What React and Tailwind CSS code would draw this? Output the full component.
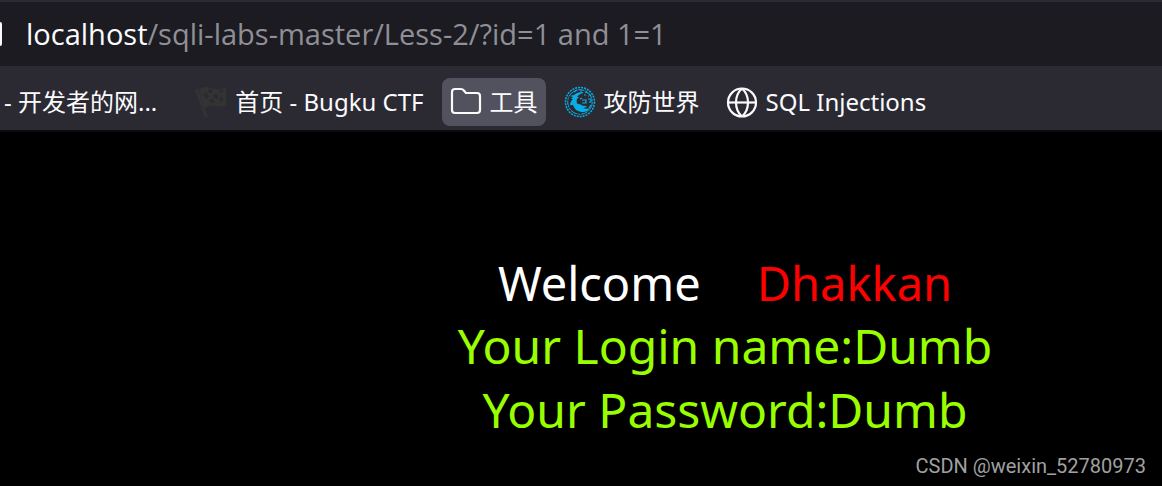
import React from 'react';

const FlagIcon = () => (
  <svg className="h-8 w-8 shrink-0" viewBox="0 0 32 32" aria-hidden="true">
    <path d="M0 4l3-1 10 28-3 1z" fill="#333333" />
    <path
      d="M4 4c4-4 8-3 12-2s10 2 15-1v18c-5 3-9 1-13 1s-6 1-9 3z"
      fill="#333333"
    />
    <path
      d="M13 3l5 1-1 3-3 0zM24 4l4-1v3l-3 1zM8 8l4-1 2 4-3 2zM18 8l5 1v4l-4-1zM14 13l4 0 2 4-4 0zM24 12l4-1v4l-3 1z"
      fill="#2b2a33"
    />
  </svg>
);

const FolderIcon = () => (
  <svg className="h-8 w-8 shrink-0" viewBox="0 0 32 32" fill="none" stroke="#fbfbfe" strokeWidth="2.2" aria-hidden="true">
    <path
      d="M5 3h6c1 0 2 .4 2.600 1.200L16 7h11a3 3 0 0 1 3 3v14a3 3 0 0 1-3 3H5a3 3 0 0 1-3-3V6a3 3 0 0 1 3-3z"
      strokeLinejoin="round"
    />
  </svg>
);

const WaveIcon = () => (
  <svg className="h-8 w-8 shrink-0" viewBox="0 0 32 32" fill="none" stroke="#06b0e6" aria-hidden="true">
    <circle cx="16" cy="16" r="14.500" strokeWidth="1.500" strokeDasharray="2 1" />
    <circle cx="16" cy="16" r="12.300" strokeWidth="1" strokeDasharray="7 1 2 1" />
    <path
      d="M19 6c-4 0-7 1-9 3l-4 1 3 1-2 2 2 0c-2 2-3 4-3 6l3 0c2 5 5 7 10 7 3 0 5-1 7-4-2 1-5 1-7 0 2 0 3-1 4-2-3 0-5 0-7-2-3 1-4-2-3-5l2-2-2 0c1-2 3-3 6-4z"
      fill="#06b0e6"
      stroke="none"
    />
    <path d="M16 13l2-1M18 14h4v3h-4M24 13h3v3h-2M10 6l3-2M16 5h2M21 6l3 1M25 8l2 2M27 19l-2 3M20 9h2M24 10h1" strokeWidth="1.200" />
  </svg>
);

const GlobeIcon = () => (
  <svg className="h-8 w-8 shrink-0" viewBox="0 0 32 32" fill="none" stroke="#fbfbfe" strokeWidth="2.2" aria-hidden="true">
    <circle cx="16" cy="16.500" r="14" />
    <path d="M16 2.500c-8 7-8 21 0 28M16 2.500c8 7 8 21 0 28" />
    <path d="M2 16.500h28" />
  </svg>
);

const Bookmark = ({ icon, label }) => (
  <a href="#" className="flex h-12 items-center gap-2 rounded-lg px-2 whitespace-nowrap">
    {icon}
    <span>{label}</span>
  </a>
);

const App = () => {
  return (
    <div className="flex min-h-screen flex-col bg-black font-['Noto_Sans','Noto_Sans_CJK_SC',sans-serif]">
      <header className="border-b-2 border-[#0c0c0d] bg-[#2b2a33] text-[#fbfbfe]">
        <div className="flex h-[66px] items-center border-t-2 border-[#2b2a33] bg-[#1c1b22]">
          <div className="h-6 w-[2px] rounded-r-sm bg-[#fbfbfe]" />
          <div
            role="textbox"
            aria-label="Address"
            contentEditable
            suppressContentEditableWarning
            className="ml-6 flex-1 font-['Open_Sans',sans-serif] text-[29px] leading-10 whitespace-nowrap text-[#8f8f96] outline-none"
          >
            <span className="text-[#fbfbfe]">localhost</span>/sqli-labs-master/Less-2/?id=1 and 1=1
          </div>
        </div>

        <nav className="flex h-16 items-center gap-[10px] pt-2 text-2xl">
          <a href="#" className="mr-4 px-1 whitespace-nowrap">
            - 开发者的网...
          </a>
          <Bookmark icon={<FlagIcon />} label="首页 - Bugku CTF" />
          <button type="button" className="flex h-12 items-center gap-2 rounded-lg bg-[#52525e] px-2 whitespace-nowrap">
            <FolderIcon />
            <span>工具</span>
          </button>
          <Bookmark icon={<WaveIcon />} label="攻防世界" />
          <Bookmark icon={<GlobeIcon />} label="SQL Injections" />
        </nav>
      </header>

      <main className="flex-1 pt-[120px] pl-72 text-center whitespace-nowrap">
        <div className="flex justify-center gap-14 text-[47px] leading-[62px] text-white">
          <span>Welcome</span>
          <span className="text-[#ff0000]">Dhakkan</span>
        </div>
        <div className="text-5xl leading-[64px] text-[#99ff00]">
          <p>Your Login name:Dumb</p>
          <p>Your Password:Dumb</p>
        </div>
      </main>

      <footer className="px-4 pb-[6px] text-right font-['Roboto',sans-serif] text-xl leading-7 text-[#a0a0a0]">
        CSDN @weixin_52780973
      </footer>
    </div>
  );
};

export default App;
